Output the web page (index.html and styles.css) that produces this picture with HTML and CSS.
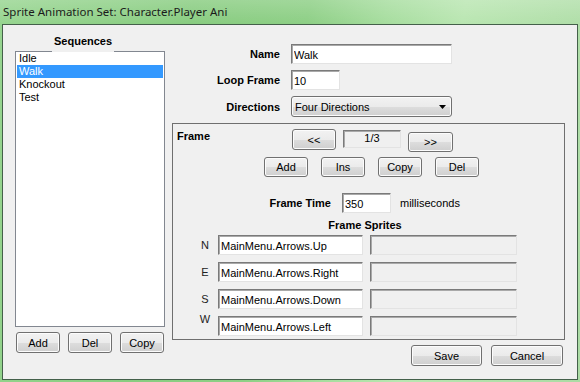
FILE: index.html
```html
<!DOCTYPE html>
<html lang="en">
<head>
    <meta charset="UTF-8">
    <title>Sprite Animation Set: Character.Player Ani</title>
    <link rel="stylesheet" href="styles.css">
</head>
<body>
    <div class="window">
        <div class="titlebar">Sprite Animation Set: Character.Player Ani</div>

        <div class="client">
            <!-- sequences list -->
            <div class="seq-col">
                <div class="seq-title">Sequences</div>
                <div class="seq-list">
                    <div class="seq-item">Idle</div>
                    <div class="seq-item selected">Walk</div>
                    <div class="seq-item">Knockout</div>
                    <div class="seq-item">Test</div>
                </div>
                <div class="seq-buttons">
                    <button class="btn">Add</button>
                    <button class="btn">Del</button>
                    <button class="btn">Copy</button>
                </div>
            </div>

            <!-- sequence details -->
            <div class="main-col">
                <div class="field-row">
                    <label class="field-label">Name</label>
                    <input class="textbox name-box" type="text" value="Walk" readonly>
                </div>
                <div class="field-row">
                    <label class="field-label">Loop Frame</label>
                    <input class="textbox loop-box" type="text" value="10" readonly>
                </div>
                <div class="field-row">
                    <label class="field-label">Directions</label>
                    <div class="combo">
                        <span>Four Directions</span>
                        <svg class="combo-arrow" width="7" height="4" viewBox="0 0 7 4"><path d="M0 0h7L3.5 4z" fill="#000"/></svg>
                    </div>
                </div>

                <div class="frame-box">
                    <div class="frame-head">
                        <div class="frame-title">Frame</div>
                        <button class="btn nav-prev">&lt;&lt;</button>
                        <div class="frame-count">1/3</div>
                        <button class="btn nav-next">&gt;&gt;</button>
                    </div>
                    <div class="frame-buttons">
                        <button class="btn">Add</button>
                        <button class="btn">Ins</button>
                        <button class="btn">Copy</button>
                        <button class="btn">Del</button>
                    </div>
                    <div class="time-row">
                        <label class="time-label">Frame Time</label>
                        <input class="textbox time-box" type="text" value="350" readonly>
                        <span class="time-unit">milliseconds</span>
                    </div>
                    <div class="sprites-title">Frame Sprites</div>
                    <div class="sprites-grid">
                        <span class="dir">N</span>
                        <input class="textbox sprite-box" type="text" value="MainMenu.Arrows.Up" readonly>
                        <input class="textbox sprite-extra" type="text" readonly>

                        <span class="dir">E</span>
                        <input class="textbox sprite-box" type="text" value="MainMenu.Arrows.Right" readonly>
                        <input class="textbox sprite-extra" type="text" readonly>

                        <span class="dir">S</span>
                        <input class="textbox sprite-box" type="text" value="MainMenu.Arrows.Down" readonly>
                        <input class="textbox sprite-extra" type="text" readonly>

                        <span class="dir dir-top">W</span>
                        <input class="textbox sprite-box" type="text" value="MainMenu.Arrows.Left" readonly>
                        <input class="textbox sprite-extra" type="text" readonly>
                    </div>
                </div>

                <div class="dialog-buttons">
                    <button class="btn save-btn">Save</button>
                    <button class="btn cancel-btn">Cancel</button>
                </div>
            </div>
        </div>
    </div>
</body>
</html>
```
FILE: styles.css
```css
body {
    margin: 0;
    font-family: "Liberation Sans", Arial, sans-serif;
    font-size: 11px;
    color: #000;
}
.window {
    width: 580px;
    height: 382px;
    display: flex;
    flex-direction: column;
    background:
        linear-gradient(to bottom, rgba(255,255,255,0.18), rgba(255,255,255,0) 24px),
        linear-gradient(100deg, #97d590 0%, #88cc80 30%, #8dcf85 48%, #a6dd9e 60%, #b9e6b1 72%, #b2e0aa 86%, #abdba4 100%);
}
.titlebar {
    height: 24px;
    padding-left: 3px;
    display: flex;
    align-items: center;
    font-family: "Noto Sans", "Open Sans", sans-serif;
    font-size: 11.5px;
    color: #1b1b1b;
    box-sizing: border-box;
    padding-bottom: 2px;
}
.client {
    flex: 1;
    margin: 0 2px 2px 2px;
    border: 1px solid #44604a;
    background-color: #f0f0f0;
    display: flex;
}

/* buttons */
.btn {
    font: inherit;
    font-weight: normal;
    color: #000;
    padding: 0;
    width: 44px;
    height: 21px;
    border: 1px solid #707070;
    border-radius: 3px;
    background: linear-gradient(to bottom, #f2f2f2 0%, #ebebeb 50%, #dddddd 51%, #cfcfcf 100%);
    box-shadow: inset 0 0 0 1px #fcfcfc;
    box-sizing: border-box;
}

/* sunken text boxes */
.textbox {
    font: inherit;
    color: #000;
    box-sizing: border-box;
    height: 20px;
    margin: 0;
    padding: 1px 2px 0 2px;
    line-height: 13px;
    border: 1px solid;
    border-color: #7a7a7a #e3e3e3 #e3e3e3 #7a7a7a;
    box-shadow: inset 1px 1px 0 #a9a9a9;
    background-color: #fff;
    outline: none;
    vertical-align: top;
}

/* left column */
.seq-col {
    width: 150px;
    margin-left: 12px;
    padding-top: 10px;
    display: flex;
    flex-direction: column;
}
.seq-title {
    align-self: flex-start;
    position: relative;
    height: 17px;
    line-height: 13px;
    padding: 0 2px;
    margin: 0 0 -1px 37px;
    font-weight: bold;
    background-color: #f0f0f0;
}
.seq-list {
    height: 276px;
    box-sizing: border-box;
    border: 1px solid #828790;
    background-color: #fff;
    padding: 0 1px;
}
.seq-item {
    line-height: 13px;
    height: 13px;
    padding-left: 2px;
}
.seq-item.selected {
    background-color: #3399ff;
    color: #fff;
}
.seq-buttons {
    display: flex;
    gap: 8px;
    margin: 5px 0 0 1px;
}

/* right column */
.main-col {
    width: 393px;
    margin-left: 7px;
    padding-top: 19px;
}
.field-row {
    display: flex;
    align-items: center;
    margin-bottom: 6px;
}
.field-label {
    width: 108px;
    margin-right: 11px;
    text-align: right;
    font-weight: bold;
}
.name-box {
    width: 161px;
}
.loop-box {
    width: 49px;
}
.combo {
    width: 161px;
    height: 21px;
    box-sizing: border-box;
    border: 1px solid #707070;
    border-radius: 3px;
    background: linear-gradient(to bottom, #f2f2f2 0%, #ebebeb 50%, #dddddd 51%, #cfcfcf 100%);
    box-shadow: inset 0 0 0 1px #fcfcfc;
    display: flex;
    align-items: center;
    justify-content: space-between;
    padding: 0 5px 0 3px;
}
.combo-arrow {
    display: block;
}

/* frame group */
.frame-box {
    height: 217px;
    box-sizing: border-box;
    border: 1px solid #6f6f6f;
    padding: 5px 0 0 4px;
}
.frame-head {
    display: flex;
    align-items: flex-start;
}
.frame-title {
    width: 115px;
    margin-top: 1px;
    line-height: 13px;
    font-weight: bold;
}
.frame-count {
    width: 58px;
    height: 18px;
    margin: 1px 0 0 7px;
    box-sizing: border-box;
    border: 1px solid;
    border-color: #7a7a7a #e3e3e3 #e3e3e3 #7a7a7a;
    box-shadow: inset 1px 1px 0 #a9a9a9;
    text-align: center;
    line-height: 15px;
}
.nav-next {
    width: 45px;
    height: 20px;
    margin: 3px 0 0 7px;
}
.frame-buttons {
    display: flex;
    gap: 13px;
    margin: 5px 0 0 87px;
}
.frame-buttons .btn {
    height: 20px;
}
.time-row {
    display: flex;
    align-items: center;
    margin-top: 16px;
}
.time-label {
    width: 154px;
    margin-right: 11px;
    text-align: right;
    font-weight: bold;
}
.time-box {
    width: 49px;
}
.time-unit {
    margin-left: 9px;
}
.sprites-title {
    margin-top: 6px;
    padding-right: 11px;
    line-height: 13px;
    text-align: center;
    font-weight: bold;
}
.sprites-grid {
    display: grid;
    grid-template-columns: 16px 145px 149px;
    grid-auto-rows: 20px;
    column-gap: 5px;
    row-gap: 7px;
    margin: 3px 0 0 20px;
    align-items: center;
}
.dir {
    text-align: center;
    color: #222;
}
.dir-top {
    align-self: start;
    margin-top: -3px;
}
.sprite-box {
    width: 145px;
}
.sprite-extra {
    width: 147px;
    margin-left: 2px;
    background-color: #f0f0f0;
}

.dialog-buttons {
    display: flex;
    justify-content: flex-end;
    gap: 9px;
    margin: 5px 2px 0 0;
}
.save-btn {
    width: 71px;
}
.cancel-btn {
    width: 72px;
}
```
